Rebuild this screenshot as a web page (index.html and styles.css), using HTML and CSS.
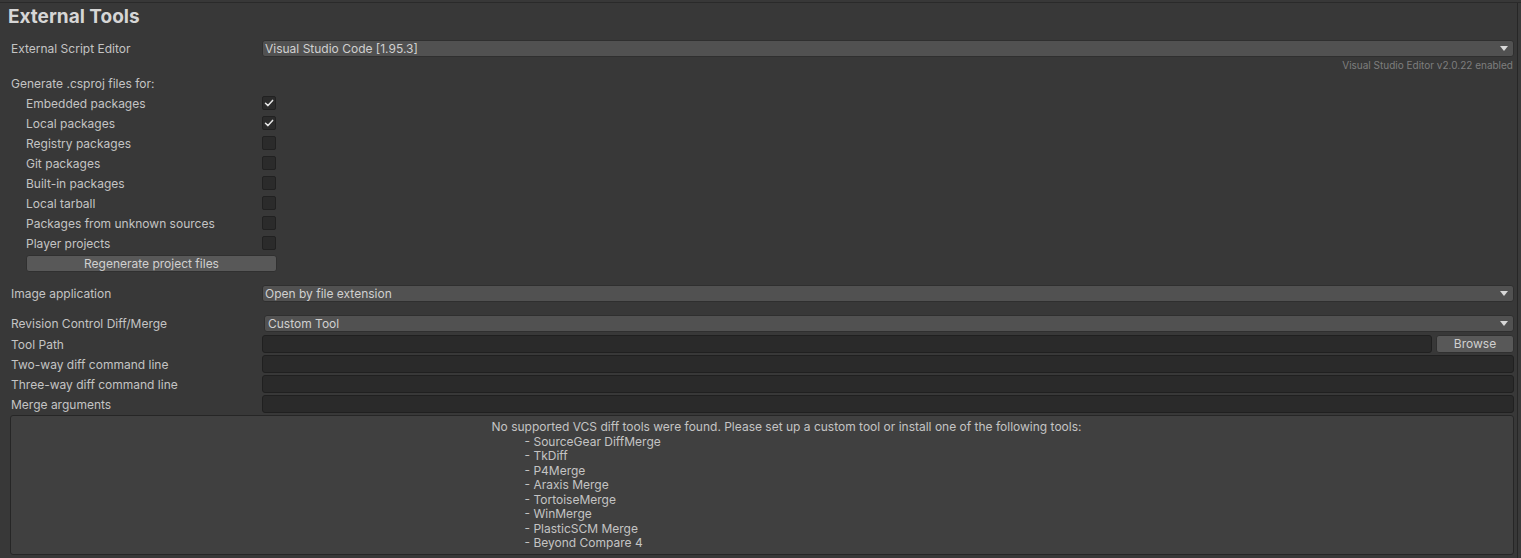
FILE: index.html
```html
<!DOCTYPE html>
<html>
<head>
<meta charset="utf-8">
<link rel="stylesheet" href="styles.css">
</head>
<body>
<div class="window">
  <div class="panel">
    <h1 class="title">External Tools</h1>

    <div class="row">
      <div class="label">External Script Editor</div>
      <div class="dropdown"><span>Visual Studio Code [1.95.3]</span><i class="arrow"></i></div>
    </div>
    <div class="note">Visual Studio Editor v2.0.22 enabled</div>

    <div class="row">
      <div class="label">Generate .csproj files for:</div>
    </div>
    <div class="row"><div class="label indent">Embedded packages</div><div class="check on"><svg viewBox="0 0 14 14" width="14" height="14"><path d="M3.5 7.2 L6 9.6 L10.6 4.4" fill="none" stroke="#e6e6e6" stroke-width="1.5" stroke-linecap="round" stroke-linejoin="round"/></svg></div></div>
    <div class="row"><div class="label indent">Local packages</div><div class="check on"><svg viewBox="0 0 14 14" width="14" height="14"><path d="M3.5 7.2 L6 9.6 L10.6 4.4" fill="none" stroke="#e6e6e6" stroke-width="1.5" stroke-linecap="round" stroke-linejoin="round"/></svg></div></div>
    <div class="row"><div class="label indent">Registry packages</div><div class="check"></div></div>
    <div class="row"><div class="label indent">Git packages</div><div class="check"></div></div>
    <div class="row"><div class="label indent">Built-in packages</div><div class="check"></div></div>
    <div class="row"><div class="label indent">Local tarball</div><div class="check"></div></div>
    <div class="row"><div class="label indent">Packages from unknown sources</div><div class="check"></div></div>
    <div class="row"><div class="label indent">Player projects</div><div class="check"></div></div>
    <div class="row"><div class="button regen">Regenerate project files</div></div>

    <div class="row gap">
      <div class="label">Image application</div>
      <div class="dropdown"><span>Open by file extension</span><i class="arrow"></i></div>
    </div>

    <div class="row gap">
      <div class="label">Revision Control Diff/Merge</div>
      <div class="dropdown shift"><span>Custom Tool</span><i class="arrow"></i></div>
    </div>
    <div class="row tall">
      <div class="label">Tool Path</div>
      <div class="input"></div>
      <div class="button browse">Browse</div>
    </div>
    <div class="row"><div class="label">Two-way diff command line</div><div class="input"></div></div>
    <div class="row"><div class="label">Three-way diff command line</div><div class="input"></div></div>
    <div class="row"><div class="label">Merge arguments</div><div class="input"></div></div>

    <div class="helpbox">
      <div class="helptext">
        <div>No supported VCS diff tools were found. Please set up a custom tool or install one of the following tools:</div>
        <div class="item">- SourceGear DiffMerge</div>
        <div class="item">- TkDiff</div>
        <div class="item">- P4Merge</div>
        <div class="item">- Araxis Merge</div>
        <div class="item">- TortoiseMerge</div>
        <div class="item">- WinMerge</div>
        <div class="item">- PlasticSCM Merge</div>
        <div class="item">- Beyond Compare 4</div>
      </div>
    </div>
  </div>
  <div class="edge"></div>
</div>
</body>
</html>
```

FILE: styles.css
```css
html, body {
  margin: 0;
  padding: 0;
  background: #383838;
}
body {
  font-family: Inter, "Noto Sans", sans-serif;
  font-size: 12px;
  color: #c4c4c4;
  width: 1521px;
  height: 558px;
  overflow: hidden;
}
.window {
  display: flex;
  height: 558px;
  border-top: 1px solid #2a2a2a;
  margin-top: 2px;
  box-sizing: border-box;
}
.panel {
  width: 1518px;
  box-sizing: border-box;
  padding: 0 3px 0 0;
  border-right: 1px solid #262626;
}
.edge {
  flex: 1;
  background: #3a3a3a;
}
.title {
  margin: 0;
  height: 35px;
  box-sizing: border-box;
  padding: 1px 0 0 8px;
  font-size: 19px;
  line-height: 26px;
  font-weight: 700;
  color: #d6d6d6;
}
.row {
  display: flex;
  align-items: center;
  height: 20px;
}
.row.gap {
  margin-top: 10px;
}
.row.tall {
  height: 21px;
}
.label {
  width: 251px;
  padding-left: 11px;
  padding-top: 2px;
  flex: none;
  white-space: nowrap;
  line-height: 16px;
}
.label.indent {
  padding-left: 26px;
  width: 236px;
}
.dropdown {
  flex: 1;
  height: 17px;
  box-sizing: border-box;
  background: #515151;
  border: 1px solid #2f2f2f;
  border-radius: 3px;
  display: flex;
  align-items: center;
  justify-content: space-between;
  padding: 0 5px 0 2px;
  color: #d0d0d0;
  line-height: 15px;
}
.dropdown.shift {
  margin-left: 2px;
  padding-left: 3px;
}
.arrow {
  width: 0;
  height: 0;
  border-left: 4px solid transparent;
  border-right: 4px solid transparent;
  border-top: 5px solid #d8d8d8;
}
.note {
  text-align: right;
  font-size: 10px;
  line-height: 14px;
  height: 15px;
  padding-top: 0px;
  color: #7e7e7e;
  padding-right: 1px;
}
.check {
  width: 14px;
  height: 14px;
  box-sizing: border-box;
  background: #2b2b2b;
  border: 1px solid #212121;
  border-radius: 2px;
  position: relative;
}
.check svg {
  position: absolute;
  left: -1px;
  top: -1px;
}
.button {
  height: 17px;
  box-sizing: border-box;
  background: #585858;
  border: 1px solid #303030;
  border-radius: 3px;
  text-align: center;
  line-height: 16px;
  color: #d0d0d0;
}
.regen {
  margin-left: 26px;
  width: 251px;
}
.input {
  flex: 1;
  height: 18px;
  box-sizing: border-box;
  background: #2a2a2a;
  border: 1px solid #202020;
  border-radius: 3px;
}
.browse {
  width: 78px;
  margin-left: 4px;
  height: 18px;
  line-height: 16px;
}
.helpbox {
  margin: 1px 0 0 10px;
  height: 140px;
  box-sizing: border-box;
  background: #404040;
  border: 1px solid #262626;
  border-radius: 3px;
  display: flex;
  justify-content: center;
  padding-top: 4px;
}
.helptext {
  line-height: 14.5px;
  color: #c4c4c4;
  white-space: nowrap;
  margin-left: 49px;
}
.item {
  padding-left: 33px;
}
```
